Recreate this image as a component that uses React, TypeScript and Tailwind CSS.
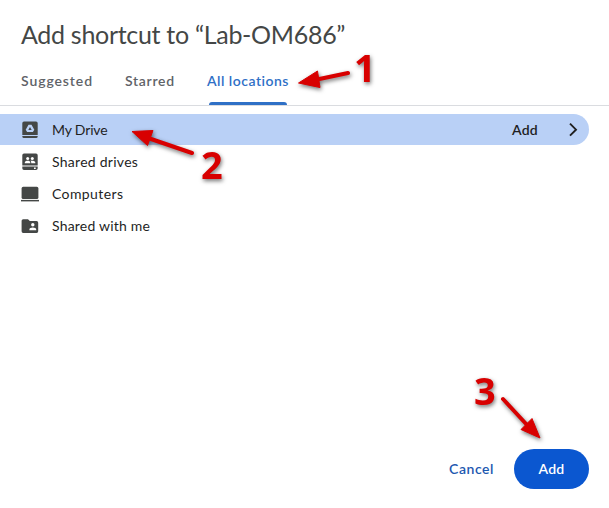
import type { ReactNode } from "react";

function DriveIcon() {
  return (
    <svg width="18" height="18" viewBox="0 0 18 18" fill="#444746">
      <path fillRule="evenodd" d="M3 .5h12a1.7 1.7 0 0 1 1.7 1.7V14H1.3V2.2A1.7 1.7 0 0 1 3 .5Zm4.5 3.2L4.7 8.8l1.4 2.3h5.8l1.4-2.3-2.8-5.1h-3Zm1.5 2.4 1.7 3H7.3l1.7-3Z" />
      <path d="M1.3 15h15.4v.5a1.6 1.6 0 0 1-1.6 1.5H2.9a1.6 1.6 0 0 1-1.6-1.5V15Z" />
    </svg>
  );
}

function SharedDrivesIcon() {
  return (
    <svg width="18" height="18" viewBox="0 0 18 18" fill="#444746">
      <path d="M3 .5h12a1.7 1.7 0 0 1 1.7 1.7v10.3H1.3V2.2A1.7 1.7 0 0 1 3 .5Z" />
      <path fillRule="evenodd" d="M1.3 13.5h15.4v1.8a1.7 1.7 0 0 1-1.7 1.7H3a1.7 1.7 0 0 1-1.7-1.7v-1.8Zm11.7 1v1.4h1.7v-1.4H13Z" />
      <g fill="#fff">
        <circle cx="6.7" cy="5.4" r="1.5" />
        <circle cx="11.3" cy="5.4" r="1.5" />
        <path d="M3.8 10.3V9.5c0-1.2 1.4-1.8 2.9-1.8s2.6.6 2.6 1.8v.8H3.8Zm6.4 0V9.4c0-.7-.3-1.2-.7-1.6 2-.5 4.8.1 4.8 1.7v.8h-4.1Z" />
      </g>
    </svg>
  );
}

function ComputerIcon() {
  return (
    <svg width="18" height="18" viewBox="0 0 18 18" fill="#444746">
      <rect x=".6" y="1.8" width="16.8" height="12.3" rx="1.6" />
      <path d="M0 14.9h18v1.5H0z" />
    </svg>
  );
}

function SharedFolderIcon() {
  return (
    <svg width="18" height="18" viewBox="0 0 18 18" fill="#444746">
      <path d="M2.2 2.2H7l1.8 1.9h6.8a1.6 1.6 0 0 1 1.6 1.6v8.6a1.6 1.6 0 0 1-1.6 1.6H2.2a1.6 1.6 0 0 1-1.6-1.6V3.8a1.6 1.6 0 0 1 1.6-1.6Z" />
      <circle cx="11.8" cy="7.8" r="1.7" fill="#fff" />
      <path d="M8.4 13.3v-.9c0-1.2 1.8-1.9 3.4-1.9s3.4.7 3.4 1.9v.9H8.4Z" fill="#fff" />
    </svg>
  );
}

function Row({ icon, label, tracking, active }: { icon: ReactNode; label: string; tracking: string; active?: boolean }) {
  return (
    <div className={`flex w-[589px] items-center rounded-r-full pl-[21px] text-sm text-[#1f1f1f] ${active ? "mb-px h-[31px] bg-[#b9d0f6]" : "h-8"}`}>
      {icon}
      <span className={`ml-[13px] whitespace-nowrap ${tracking}`}>{label}</span>
      {active && (
        <>
          <span className="ml-auto mr-[31px] font-semibold tracking-[0.25px]">Add</span>
          <svg className="mr-[11px]" width="9" height="14" viewBox="0 0 9 14" fill="none" stroke="#1f1f1f" strokeWidth="1.9">
            <path d="m1 .7 6 6-6 6" />
          </svg>
        </>
      )}
    </div>
  );
}

function Annotations() {
  return (
    <svg className="pointer-events-none absolute inset-0 drop-shadow-[1px_2px_2px_rgba(0,0,0,0.55)]" width="609" height="508" fill="#d80000">
      <g stroke="#d80000" strokeWidth="4" strokeLinecap="round">
        <path d="M348 73 317 79.5M192 153l-41-14M503 399l25 27" />
      </g>
      <path d="m298.5 83 19-12 2.500 16.500ZM132 131.500l21 -1-5.500 15ZM540 438l-19-8.500 11-11Z" stroke="#d80000" strokeLinejoin="round" />
      <g fontFamily="Open Sans, sans-serif" fontWeight="700" fontSize="38">
        <text x="354" y="82">1</text>
        <text x="201" y="179">2</text>
        <text x="474" y="405">3</text>
      </g>
    </svg>
  );
}

export default function App() {
  return (
    <main className="relative flex h-[508px] w-[609px] flex-col overflow-hidden bg-white font-[Lato,sans-serif]">
      <h1 className="ml-[21px] mt-[18px] h-8 whitespace-nowrap text-[25px] leading-8 tracking-[-0.3px] text-[#444746]">Add shortcut to “Lab-OM686”</h1>
      <nav className="mt-2 flex h-12 border-b border-[#dadce0] pl-[21px] text-sm font-semibold text-[#5f6368]">
        <button className="mr-8 flex w-[72px] items-center whitespace-nowrap pb-0.5 tracking-[0.9px]">Suggested</button>
        <button className="mr-8 flex w-[50px] items-center whitespace-nowrap pb-0.5 tracking-[0.7px]">Starred</button>
        <button className="relative flex w-[82px] items-center whitespace-nowrap pb-0.5 tracking-[0.5px] text-[#2f70c6]">
          All locations
          <span className="absolute bottom-0 left-[2px] h-[3px] w-[78px] rounded-t-full bg-[#2f70c6]" />
        </button>
      </nav>
      <section className="mt-[8px] flex flex-col">
        <Row icon={<DriveIcon />} label="My Drive" tracking="tracking-[-0.15px]" active />
        <Row icon={<SharedDrivesIcon />} label="Shared drives" tracking="tracking-[0.27px]" />
        <Row icon={<ComputerIcon />} label="Computers" tracking="tracking-[0.4px]" />
        <Row icon={<SharedFolderIcon />} label="Shared with me" tracking="tracking-[0.2px]" />
      </section>
      <footer className="mb-[19px] mr-5 mt-auto flex items-center justify-end gap-5 text-sm font-semibold">
        <button className="text-[#1d58b0] tracking-[0.55px]">Cancel</button>
        <button className="h-10 w-[75px] rounded-full bg-[#0b57d0] tracking-[0.3px] text-white">Add</button>
      </footer>
      <Annotations />
    </main>
  );
}
